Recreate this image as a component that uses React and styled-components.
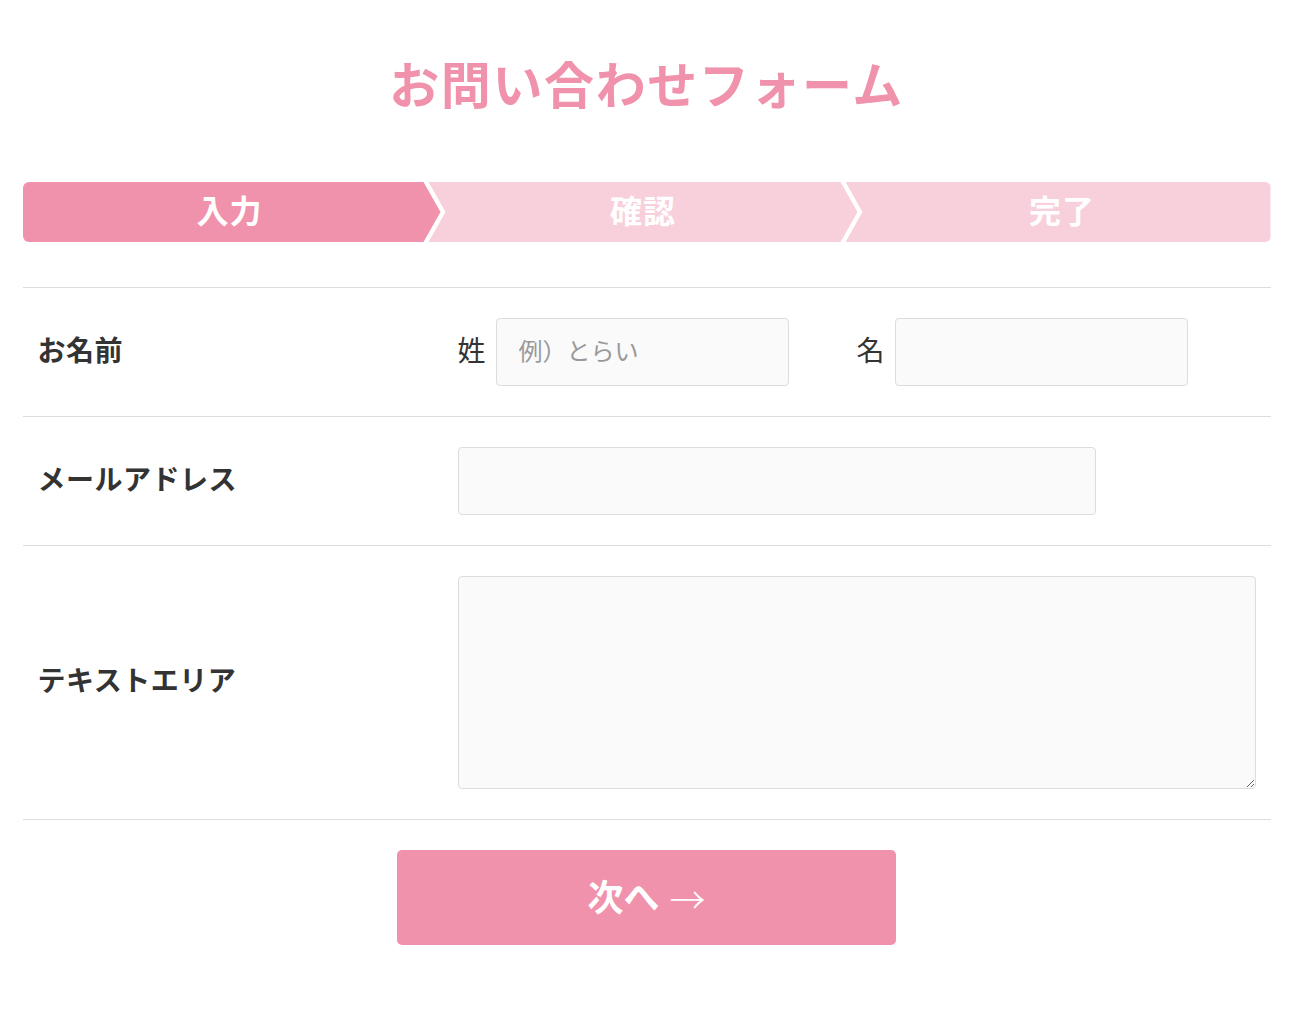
import React from 'react'
import styled, { createGlobalStyle } from 'styled-components'

const GlobalStyle = createGlobalStyle`
  body {
    margin: 0;
    background: #fff;
    font-family: "Noto Sans CJK JP", "Noto Sans", sans-serif;
    color: #333;
  }
`

const steps = ['入力', '確認', '完了']

const App = () => {
  return (
    <>
      <GlobalStyle />
      <Page>
        <Title>お問い合わせフォーム</Title>
        <Steps>
          {steps.map((s, i) => (
            <Step key={s} $active={i === 0} $pos={i === 0 ? 'first' : i === steps.length - 1 ? 'last' : 'middle'}>
              {s}
            </Step>
          ))}
        </Steps>

        <Form>
          <Row>
            <Label>お名前</Label>
            <Field>
              <Half>
                <SubLabel>姓</SubLabel>
                <Input placeholder="例）とらい" $width="293px" />
              </Half>
              <Half>
                <SubLabel>名</SubLabel>
                <Input $width="293px" />
              </Half>
            </Field>
          </Row>
          <Row>
            <Label>メールアドレス</Label>
            <Field>
              <Input $width="80%" />
            </Field>
          </Row>
          <Row>
            <Label>テキストエリア</Label>
            <Field>
              <TextArea />
            </Field>
          </Row>
        </Form>

        <ButtonWrap>
          <NextButton type="button">次へ<Arrow>→</Arrow></NextButton>
        </ButtonWrap>
      </Page>
    </>
  )
}

export default App

const Page = styled.div`
  width: 1248px;
  margin: 0 auto;
  padding-bottom: 90px;
`
const Title = styled.h1`
  margin: 0;
  padding-top: 45px;
  padding-bottom: 4px;
  text-align: center;
  font-size: 50px;
  line-height: 75px;
  font-weight: 700;
  color: #f092ab;
  letter-spacing: 1.6px;
`
const Steps = styled.div`
  display: flex;
  margin-top: 58px;
  height: 60px;
`
const clips = {
  first: 'polygon(0 0, calc(100% - 17px) 0, 100% 50%, calc(100% - 17px) 100%, 0 100%)',
  middle: 'polygon(0 0, calc(100% - 17px) 0, 100% 50%, calc(100% - 17px) 100%, 0 100%, 17px 50%)',
  last: 'polygon(0 0, 100% 0, 100% 100%, 0 100%, 17px 50%)',
}
const widths = { first: '418px', middle: '429px', last: 'auto' }
const Step = styled.div`
  flex: ${p => (p.$pos === 'last' ? '1' : 'none')};
  width: ${p => widths[p.$pos]};
  box-sizing: border-box;
  display: flex;
  align-items: center;
  justify-content: center;
  padding-bottom: 6px;
  padding-left: ${p => (p.$pos === 'last' ? '8px' : '0')};
  padding-right: ${p => (p.$pos === 'first' ? '4px' : '0')};
  background: ${p => (p.$active ? '#f092ab' : '#f8d0dc')};
  color: #fff;
  font-size: 32px;
  font-weight: 700;
  letter-spacing: 1px;
  clip-path: ${p => clips[p.$pos]};
  margin-left: ${p => (p.$pos === 'first' ? '0' : '-12px')};
  border-radius: ${p => (p.$pos === 'first' ? '6px 0 0 6px' : p.$pos === 'last' ? '0 6px 6px 0' : '0')};
`
const Form = styled.div`
  margin-top: 45px;
  border-top: 1px solid #ddd;
`
const Row = styled.div`
  display: flex;
  align-items: center;
  padding: 30px 15px;
  border-bottom: 1px solid #ddd;
`
const Label = styled.div`
  width: 420px;
  flex-shrink: 0;
  padding-bottom: 7px;
  font-size: 28px;
  font-weight: 700;
  letter-spacing: 0.5px;
  color: #333;
`
const Field = styled.div`
  flex: 1;
  display: flex;
  align-items: center;
`
const Half = styled.div`
  width: 50%;
  display: flex;
  align-items: center;
`
const SubLabel = styled.span`
  font-size: 28px;
  margin-right: 10px;
  padding-bottom: 6px;
  color: #333;
`
const Input = styled.input`
  box-sizing: border-box;
  width: ${p => p.$width};
  height: 68px;
  padding: 0 22px 5px;
  background: #fafafa;
  border: 1px solid #ddd;
  border-radius: 4px;
  font-family: inherit;
  font-size: 24px;
  color: #333;
  outline: none;

  &::placeholder {
    color: #999;
  }
`
const TextArea = styled.textarea`
  box-sizing: border-box;
  width: 100%;
  height: 213px;
  padding: 15px 22px;
  background: #fafafa;
  border: 1px solid #ddd;
  border-radius: 4px;
  font-family: inherit;
  font-size: 24px;
  display: block;
  outline: none;
`
const ButtonWrap = styled.div`
  display: flex;
  justify-content: center;
  margin-top: 30px;
`
const NextButton = styled.button`
  width: 499px;
  height: 95px;
  padding-bottom: 6px;
  background: #f092ab;
  border: none;
  border-radius: 5px;
  color: #fff;
  font-family: inherit;
  font-size: 36px;
  font-weight: 700;
  cursor: pointer;
  display: flex;
  align-items: center;
  justify-content: center;
  gap: 10px;
`
const Arrow = styled.span`
  font-weight: 300;
  font-family: "Noto Sans CJK JP", sans-serif;
  font-size: 36px;
  position: relative;
  top: 3px;
`
